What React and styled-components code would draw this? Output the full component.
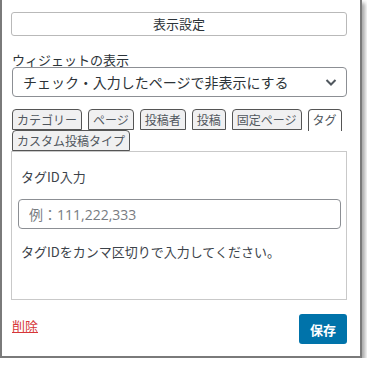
import styled, { createGlobalStyle } from "styled-components";

const GlobalStyle = createGlobalStyle`
	html, body {
		margin: 0;
		background: #fff;
	}
	body {
		font-family: "Noto Sans CJK JP", "Open Sans", sans-serif;
		color: #1d2327;
	}
`;

const Window = styled.div`
	box-sizing: border-box;
	width: 362px;
	height: 358px;
	border: 2px solid #7a7a7a;
	border-top: none;
	box-shadow: 3px 3px 4px rgba(0, 0, 0, 0.35);
	background: #fff;
	padding: 12px 13px 0 9px;
	display: flex;
	flex-direction: column;
`;

const WideButton = styled.button`
	box-sizing: border-box;
	width: 100%;
	height: 24px;
	border: 1px solid #b9b9b9;
	border-radius: 3px;
	background: #fff;
	font-family: inherit;
	font-size: 13px;
	color: #2c3338;
	padding: 0;
	line-height: 20px;
`;

const Label = styled.div`
	margin-top: 16px;
	font-size: 13px;
	line-height: 15px;
	padding-left: 1px;
	color: #2c3338;
`;

const Select = styled.div`
	box-sizing: border-box;
	margin-left: 1px;
	height: 30px;
	border: 1px solid #8c8f94;
	border-radius: 4px;
	display: flex;
	align-items: center;
	justify-content: space-between;
	padding: 0 8px 0 10px;
	font-size: 14px;
	color: #2c3338;
`;

const TabList = styled.div`
	margin-top: 12px;
	padding-left: 1px;
	display: flex;
	flex-wrap: wrap;
	column-gap: 6px;
	row-gap: 0;
	position: relative;
	z-index: 1;
`;

const Tab = styled.div`
	box-sizing: border-box;
	height: ${(p) => (p.$active ? "22px" : "21px")};
	margin-bottom: ${(p) => (p.$active ? "-1px" : "0")};
	padding: 0 4px;
	border: 1px solid #555;
	border-bottom: ${(p) => (p.$active ? "none" : "1px solid #555")};
	border-radius: 4px 4px 0 0;
	background: ${(p) => (p.$active ? "#fff" : "#f0f0f1")};
	font-size: 12px;
	line-height: 19px;
	color: #50575e;
	white-space: nowrap;
`;

const Panel = styled.div`
	box-sizing: border-box;
	height: 149px;
	border: 1px solid #c9c9c9;
	padding: 16px 5px 0 6px;
`;

const FieldLabel = styled.div`
	font-size: 13px;
	line-height: 17px;
	padding-left: 3px;
	color: #3c434a;
`;

const Input = styled.input`
	box-sizing: border-box;
	display: block;
	width: 100%;
	height: 30px;
	margin-top: 14px;
	border: 1px solid #8c8f94;
	border-radius: 4px;
	padding: 0 10px;
	font-family: "Open Sans", "Noto Sans CJK JP", sans-serif;
	font-size: 14px;
	color: #2c3338;
	&::placeholder {
		color: #787c82;
	}
`;

const Help = styled.div`
	margin-top: 14px;
	padding-left: 3px;
	font-size: 13px;
	line-height: 17px;
	color: #3c434a;
`;

const Footer = styled.div`
	display: flex;
	justify-content: space-between;
	align-items: flex-start;
	margin-top: 14px;
	padding-left: 1px;
`;

const DeleteLink = styled.a`
	font-size: 13px;
	line-height: 17px;
	margin-top: 3px;
	color: #d63638;
	text-decoration: underline;
`;

const SaveButton = styled.button`
	box-sizing: border-box;
	width: 48px;
	height: 30px;
	border: none;
	border-radius: 3px;
	background: #0073aa;
	color: #fff;
	font-family: inherit;
	font-size: 13px;
	font-weight: 700;
	padding: 0;
`;

const tabs = ["カテゴリー", "ページ", "投稿者", "投稿", "固定ページ", "タグ", "カスタム投稿タイプ"];

function Chevron() {
	return (
		<svg width="14" height="14" viewBox="0 0 14 14">
			<path d="M2.5 5l4.5 4.5L11.5 5" fill="none" stroke="#50575e" strokeWidth="2" />
		</svg>
	);
}

export default function App() {
	return (
		<>
			<GlobalStyle />
			<Window>
				<WideButton>表示設定</WideButton>
				<Label>ウィジェットの表示</Label>
				<Select>
					<span>チェック・入力したページで非表示にする</span>
					<Chevron />
				</Select>
				<TabList>
					{tabs.map((t) => (
						<Tab key={t} $active={t === "タグ"}>
							{t}
						</Tab>
					))}
				</TabList>
				<Panel>
					<FieldLabel>タグID入力</FieldLabel>
					<Input placeholder="例：111,222,333" />
					<Help>タグIDをカンマ区切りで入力してください。</Help>
				</Panel>
				<Footer>
					<DeleteLink href="#">削除</DeleteLink>
					<SaveButton>保存</SaveButton>
				</Footer>
			</Window>
		</>
	);
}
